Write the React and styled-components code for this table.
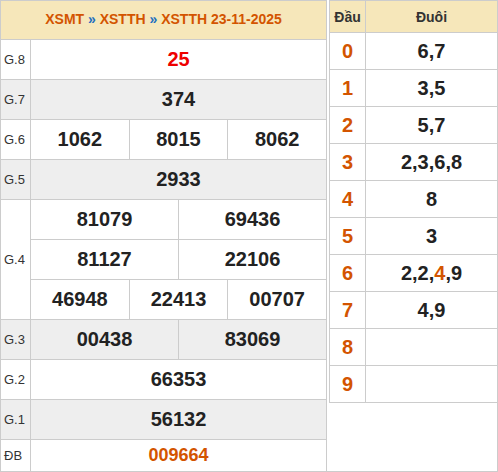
import React from "react";
import styled, { createGlobalStyle } from "styled-components";

const GlobalStyle = createGlobalStyle`
  body {
    margin: 0;
    background: #fff;
    font-family: "Liberation Sans", Arial, sans-serif;
  }
  * { box-sizing: border-box; }
`;

const BORDER = "#cccccc";
const HEAD_BG = "#f6e7ba";
const ORANGE = "#d35400";
const DARK = "#222222";

const PRIZES = [
  { label: "G.8", rows: [["25"]], shade: false, color: "#ee0000" },
  { label: "G.7", rows: [["374"]], shade: true },
  { label: "G.6", rows: [["1062", "8015", "8062"]], shade: false },
  { label: "G.5", rows: [["2933"]], shade: true },
  {
    label: "G.4",
    rows: [
      ["81079", "69436"],
      ["81127", "22106"],
      ["46948", "22413", "00707"],
    ],
    shade: false,
  },
  { label: "G.3", rows: [["00438", "83069"]], shade: true },
  { label: "G.2", rows: [["66353"]], shade: false },
  { label: "G.1", rows: [["56132"]], shade: true },
  { label: "ĐB", rows: [["009664"]], shade: false, color: ORANGE, size: 18, height: 31 },
];

const TAILS = [
  ["6", "7"],
  ["3", "5"],
  ["5", "7"],
  ["2", "3", "6", "8"],
  ["8"],
  ["3"],
  ["2", "2", "4", "9"],
  ["4", "9"],
  [],
  [],
];

const App = () => {
  return (
    <>
      <GlobalStyle />
      <Page>
        <ResultPanel>
          <Title>
            XSMT <Arrow>»</Arrow> XSTTH <Arrow>»</Arrow> XSTTH 23-11-2025
          </Title>
          {PRIZES.map((prize) => (
            <PrizeRow key={prize.label} $shade={prize.shade}>
              <Label>{prize.label}</Label>
              <Stack>
                {prize.rows.map((row, i) => (
                  <SubRow key={i}>
                    {row.map((num) => (
                      <Num
                        key={num}
                        $color={prize.color}
                        $size={prize.size}
                        $h={prize.height}
                      >
                        {num}
                      </Num>
                    ))}
                  </SubRow>
                ))}
              </Stack>
            </PrizeRow>
          ))}
        </ResultPanel>

        <LotoPanel>
          <LotoGrid>
            <HeadCell $first>Đầu</HeadCell>
            <HeadCell>Đuôi</HeadCell>
            {TAILS.map((tails, head) => (
              <React.Fragment key={head}>
                <HeadDigit>{head}</HeadDigit>
                <TailCell>
                  {tails.map((t, i) => (
                    <React.Fragment key={i}>
                      {i > 0 && ","}
                      <Tail $hit={head === 6 && i === 2}>{t}</Tail>
                    </React.Fragment>
                  ))}
                </TailCell>
              </React.Fragment>
            ))}
          </LotoGrid>
        </LotoPanel>
      </Page>
    </>
  );
};

export default App;

const Page = styled.div`
  display: flex;
  align-items: flex-start;
  width: 498px;
`;

const ResultPanel = styled.div`
  width: 327px;
  border: 1px solid ${BORDER};
  border-bottom: none;
`;

const Title = styled.div`
  height: 39px;
  padding-bottom: 3px;
  display: flex;
  align-items: center;
  justify-content: center;
  background: ${HEAD_BG};
  border-bottom: 1px solid ${BORDER};
  color: ${ORANGE};
  font-weight: bold;
  font-size: 14px;
  white-space: pre;
`;

const Arrow = styled.span`
  color: #1f6fc0;
`;

const PrizeRow = styled.div`
  display: flex;
  background: ${(p) => (p.$shade ? "#eeeeee" : "#ffffff")};
  border-bottom: 1px solid ${BORDER};
`;

const Label = styled.div`
  width: 30px;
  flex: none;
  display: flex;
  align-items: center;
  padding-left: 3px;
  border-right: 1px solid ${BORDER};
  color: #333;
  font-size: 13px;
`;

const Stack = styled.div`
  flex: 1;
  display: flex;
  flex-direction: column;
`;

const SubRow = styled.div`
  display: flex;
  & + & {
    border-top: 1px solid ${BORDER};
  }
`;

const Num = styled.div`
  flex: 1 1 0;
  height: ${(p) => p.$h || 39}px;
  display: flex;
  align-items: center;
  justify-content: center;
  color: ${(p) => p.$color || DARK};
  font-weight: bold;
  font-size: ${(p) => p.$size || 20}px;
  & + & {
    border-left: 1px solid ${BORDER};
  }
`;

const LotoPanel = styled.div`
  width: 171px;
  height: 472px;
  padding-left: 2px;
  border-right: 1px solid ${BORDER};
  border-bottom: 1px solid ${BORDER};
`;

const LotoGrid = styled.div`
  display: grid;
  grid-template-columns: 36px 1fr;
  border-left: 1px solid ${BORDER};
  border-top: 1px solid ${BORDER};
`;

const HeadCell = styled.div`
  height: 32px;
  display: flex;
  align-items: center;
  justify-content: center;
  background: ${HEAD_BG};
  border-bottom: 1px solid ${BORDER};
  border-right: ${(p) => (p.$first ? `1px solid ${BORDER}` : "none")};
  color: #333;
  font-weight: bold;
  font-size: 14px;
`;

const HeadDigit = styled.div`
  height: 37px;
  display: flex;
  align-items: center;
  justify-content: center;
  border-right: 1px solid ${BORDER};
  border-bottom: 1px solid ${BORDER};
  color: ${ORANGE};
  font-weight: bold;
  font-size: 20px;
`;

const TailCell = styled.div`
  height: 37px;
  display: flex;
  align-items: center;
  justify-content: center;
  border-bottom: 1px solid ${BORDER};
  color: ${DARK};
  font-weight: bold;
  font-size: 20px;
`;

const Tail = styled.span`
  color: ${(p) => (p.$hit ? ORANGE : "inherit")};
`;
